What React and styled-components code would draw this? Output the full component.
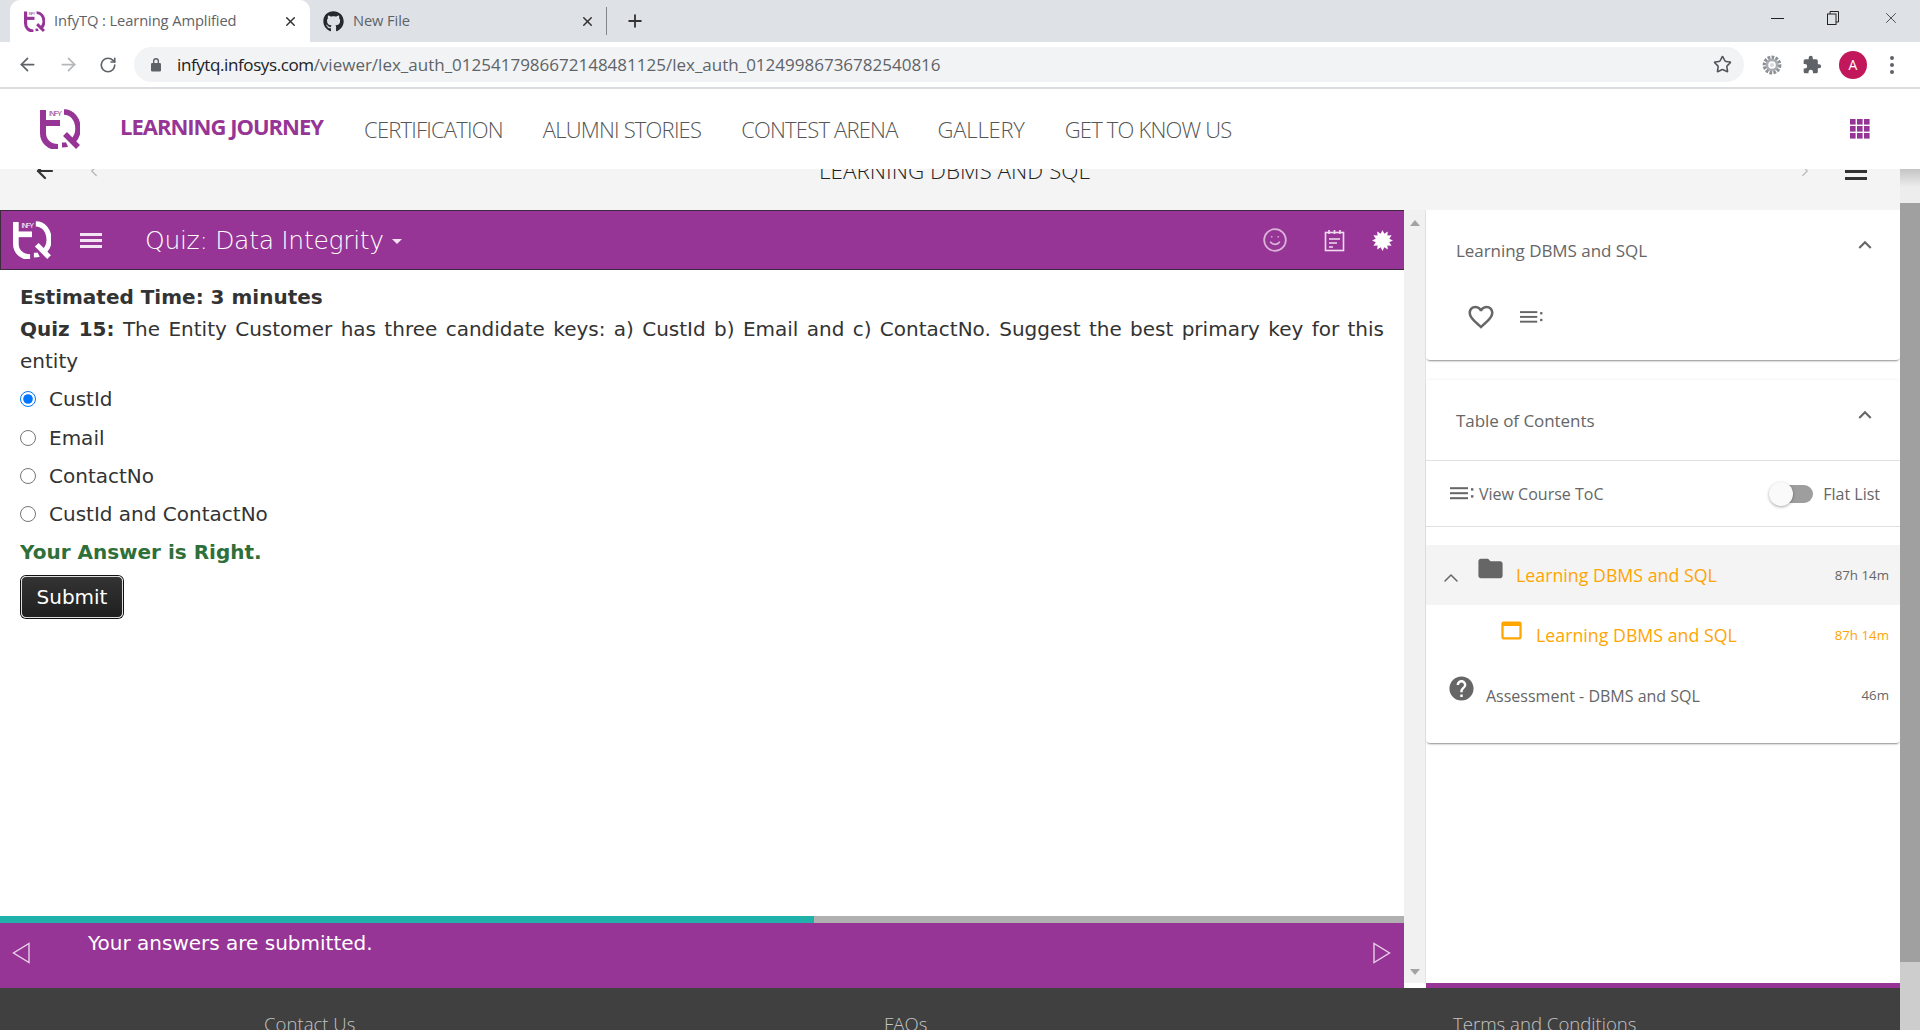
import React from 'react'
import styled, { createGlobalStyle } from 'styled-components'
import { FaGithub } from 'react-icons/fa'
import { MdFolder, MdHelp, MdFavoriteBorder, MdWebAsset, MdKeyboardArrowUp } from 'react-icons/md'
import { ArrowLeft, ArrowRight, RotateCw, Star, X, Plus, ChevronLeft, ChevronRight, ChevronUp, Smile } from 'lucide-react'

const PURPLE = '#963596'

const GlobalStyle = createGlobalStyle`
    html, body {
        margin: 0;
        padding: 0;
        height: 100%;
        overflow: hidden;
        background: #fff;
    }
    * {
        box-sizing: border-box;
    }
`

const Logo = ({ color, size }) => (
    <svg width={size} height={size} viewBox="0 0 40 40" fill="none" stroke={color}>
        <path d="M3 1 V24 C3 32 9 38 18 38" strokeWidth="6" />
        <path d="M3 14 H20" strokeWidth="6" />
        <path d="M24 3 C32 3 38 10 38 20 C38 26 36 29 33 32" strokeWidth="5.5" />
        <path d="M22 36 C24 36 26 36 27 35.5" strokeWidth="5" />
        <path d="M25 25 L38 38" strokeWidth="5.5" />
        <text x="9" y="7" fontSize="7" fill={color} stroke="none" fontFamily="Liberation Sans, sans-serif" textLength="13">INFY</text>
    </svg>
)

const ListIcon = ({ size, color }) => (
    <svg width={size} height={size * 0.6} viewBox="0 0 24 14" fill={color}>
        <rect x="0" y="1" width="18" height="2" />
        <rect x="0" y="6" width="18" height="2" />
        <rect x="0" y="11" width="18" height="2" />
        <rect x="21" y="2" width="2.4" height="2.4" />
        <rect x="21" y="9" width="2.4" height="2.4" />
    </svg>
)

const Burst = () => {
    // twelve pointed badge
    const points = []
    for (let i = 0; i < 24; i++) {
        const r = i % 2 ? 7 : 10.5
        const a = (i * Math.PI) / 12
        points.push(`${10.5 + r * Math.sin(a)},${10.5 - r * Math.cos(a)}`)
    }
    return (
        <svg width="21" height="21" viewBox="0 0 21 21">
            <polygon points={points.join(' ')} fill="#fff" />
        </svg>
    )
}

const NotesIcon = () => (
    <svg width="21" height="23" viewBox="0 0 21 23" fill="none" stroke="#f0dcf0" strokeWidth="1.6">
        <rect x="1.5" y="3.5" width="18" height="18" />
        <path d="M5 1 V5 M10.5 1 V5 M16 1 V5" />
        <path d="M5 10 H16 M5 14 H13 M5 18 H9" />
    </svg>
)

const AppsIcon = () => (
    <svg width="20" height="20" viewBox="0 0 20 20" fill={PURPLE}>
        {[0, 7, 14].map(y => [0, 7, 14].map(x => <rect key={`${x}-${y}`} x={x} y={y} width="5.6" height="5.6" />))}
    </svg>
)

const PuzzleIcon = () => (
    <svg width="20" height="20" viewBox="0 0 24 24" fill="#5f6368">
        <path d="M20.5 11H19V7a2 2 0 0 0-2-2h-4V3.5a2.5 2.5 0 0 0-5 0V5H4a2 2 0 0 0-2 2v3.8h1.5a2.7 2.7 0 0 1 0 5.4H2V20a2 2 0 0 0 2 2h3.8v-1.5a2.7 2.7 0 0 1 5.4 0V22H17a2 2 0 0 0 2-2v-4h1.5a2.5 2.5 0 0 0 0-5z" />
    </svg>
)

const GearIcon = () => (
    <svg width="20" height="20" viewBox="0 0 20 20">
        <circle cx="10" cy="10" r="7.4" fill="none" stroke="#8d9196" strokeWidth="4" strokeDasharray="2.6 1.2" />
        <circle cx="10" cy="10" r="5" fill="none" stroke="#a9adb1" strokeWidth="2.4" />
        <circle cx="10" cy="10" r="2" fill="#d6d8da" />
    </svg>
)

const LockIcon = () => (
    <svg width="12" height="15" viewBox="0 0 12 15" fill="#5f6368">
        <path d="M3 6V4a3 3 0 0 1 6 0v2h-1.4V4a1.6 1.6 0 0 0-3.2 0v2z" />
        <rect x="1" y="6" width="10" height="8.4" rx="1.2" />
    </svg>
)

const RestoreIcon = () => (
    <svg width="12" height="14" viewBox="0 0 12 14" fill="none" stroke="#222" strokeWidth="1">
        <rect x="0.5" y="3" width="8.5" height="10.5" />
        <path d="M3 3V0.5H11.5V11H9" />
    </svg>
)

const tocRows = [
    { id: 1, title: 'Learning DBMS and SQL', time: '87h 14m', kind: 'folder' },
    { id: 2, title: 'Learning DBMS and SQL', time: '87h 14m', kind: 'resource' },
    { id: 3, title: 'Assessment - DBMS and SQL', time: '46m', kind: 'quiz' },
]

const options = ['CustId', 'Email', 'ContactNo', 'CustId and ContactNo']

const navItems = ['CERTIFICATION', 'ALUMNI STORIES', 'CONTEST ARENA', 'GALLERY', 'GET TO KNOW US']

const App = () => {
    return (
        <Page>
            <GlobalStyle />
            <TabStrip>
                <ActiveTab>
                    <Logo color={PURPLE} size={21} />
                    <TabTitle>InfyTQ : Learning Amplified</TabTitle>
                    <X size={15} strokeWidth={2.4} color="#333" />
                </ActiveTab>
                <Tab>
                    <FaGithub size={21} color="#24292e" />
                    <TabTitle>New File</TabTitle>
                    <X size={15} strokeWidth={2.4} color="#333" />
                </Tab>
                <TabDivider />
                <Plus size={20} strokeWidth={2.2} color="#333" />
                <WindowControls>
                    <MinimizeBar />
                    <RestoreIcon />
                    <X size={18} strokeWidth={1} color="#222" />
                </WindowControls>
            </TabStrip>

            <Toolbar>
                <ArrowLeft size={21} color="#5f6368" strokeWidth={2} />
                <ArrowRight size={21} color="#b4b7ba" strokeWidth={2} />
                <RotateCw size={18} color="#5f6368" strokeWidth={2.2} />
                <Omnibox>
                    <LockIcon />
                    <Url><b>infytq.infosys.com</b>/viewer/lex_auth_0125417986672148481125/lex_auth_01249986736782540816</Url>
                    <Star size={19} color="#50555a" strokeWidth={2} />
                </Omnibox>
                <Extensions>
                    <GearIcon />
                    <PuzzleIcon />
                    <Avatar>A</Avatar>
                    <Dots><i /><i /><i /></Dots>
                </Extensions>
            </Toolbar>

            <SiteNav>
                <NavLogo><Logo color={PURPLE} size={40} /></NavLogo>
                <NavActive>LEARNING JOURNEY</NavActive>
                <NavLinks>
                    {navItems.map(item => <NavLink key={item}>{item}</NavLink>)}
                </NavLinks>
                <AppsIcon />
            </SiteNav>

            <Body>
                <Column>
                    <SubHeader>
                        <SubHeaderRow>
                            <ArrowLeft size={24} color="#333" strokeWidth={2.2} />
                            <PrevChevron><ChevronLeft size={18} color="#bbb" strokeWidth={2} /></PrevChevron>
                            <CourseTitle>LEARNING DBMS AND SQL</CourseTitle>
                            <ChevronRight size={18} color="#bbb" strokeWidth={1.6} />
                            <TwoBars />
                        </SubHeaderRow>
                    </SubHeader>

                    <Workspace>
                        <QuizPane>
                            <QuizHeader>
                                <Logo color="#fff" size={38} />
                                <HeaderMenu><i /><i /><i /></HeaderMenu>
                                <QuizTitle>Quiz: Data Integrity</QuizTitle>
                                <Caret />
                                <HeaderIcons>
                                    <SmileWrap><Smile size={26} color="#d9b3d9" strokeWidth={1.6} /></SmileWrap>
                                    <NotesIcon />
                                    <Burst />
                                </HeaderIcons>
                            </QuizHeader>

                            <QuizContent>
                                <TextLine><strong>Estimated Time: 3 minutes</strong></TextLine>
                                <Question><strong>Quiz 15:</strong> The Entity Customer has three candidate keys: a) CustId b) Email and c) ContactNo. Suggest the best primary key for this entity</Question>
                                {options.map((option, i) => (
                                    <Option key={option}>
                                        <Radio type="radio" name="quiz" defaultChecked={i === 0} />
                                        <span>{option}</span>
                                    </Option>
                                ))}
                                <Result>Your Answer is Right.</Result>
                                <SubmitButton>Submit</SubmitButton>
                            </QuizContent>

                            <Progress><ProgressFill style={{ width: `${(814 / 1404) * 100}%` }} /></Progress>
                            <BottomBar>
                                <BarArrow width="18" height="22" viewBox="0 0 18 22" fill="none" stroke="#e8cfe8" strokeWidth="1.4"><path d="M17 1.5 V20.5 L1.5 11 Z" /></BarArrow>
                                <BottomText>Your answers are submitted.</BottomText>
                                <BarArrow width="18" height="22" viewBox="0 0 18 22" fill="none" stroke="#e8cfe8" strokeWidth="1.4"><path d="M1 1.5 V20.5 L16.5 11 Z" /></BarArrow>
                            </BottomBar>
                        </QuizPane>

                        <PaneScroll>
                            <ArrowUp />
                            <ArrowDown />
                        </PaneScroll>

                        <Sidebar>
                            <Card>
                                <CardHeader>
                                    <CardTitle>Learning DBMS and SQL</CardTitle>
                                    <MdKeyboardArrowUp size={26} color="#666" />
                                </CardHeader>
                                <CardActions>
                                    <MdFavoriteBorder size={30} color="#666" />
                                    <ListIcon size={23} color="#666" />
                                </CardActions>
                            </Card>

                            <TocCard>
                                <CardHeader>
                                    <CardTitle>Table of Contents</CardTitle>
                                    <MdKeyboardArrowUp size={26} color="#666" />
                                </CardHeader>
                                <TocToolbar>
                                    <ListIcon size={24} color="#666" />
                                    <ToolbarLabel>View Course ToC</ToolbarLabel>
                                    <Toggle><ToggleThumb /></Toggle>
                                    <FlatLabel>Flat List</FlatLabel>
                                </TocToolbar>
                                <TocList>
                                    {tocRows.map(row => (
                                        <TocRow key={row.id} $kind={row.kind}>
                                            {row.kind === 'folder' && <ChevronUp size={24} color="#666" strokeWidth={1.5} />}
                                            {row.kind === 'folder' && <RowIcon $kind={row.kind}><MdFolder size={29} color="#666" /></RowIcon>}
                                            {row.kind === 'resource' && <RowIcon $kind={row.kind}><MdWebAsset size={27} color="#ffa500" /></RowIcon>}
                                            {row.kind === 'quiz' && <RowIcon $kind={row.kind}><MdHelp size={29} color="#666" /></RowIcon>}
                                            <RowTitle $kind={row.kind}>{row.title}</RowTitle>
                                            <RowTime $kind={row.kind}>{row.time}</RowTime>
                                        </TocRow>
                                    ))}
                                </TocList>
                            </TocCard>
                        </Sidebar>
                    </Workspace>

                    <Footer>
                        <FooterLink>Contact Us</FooterLink>
                        <FooterLink>FAQs</FooterLink>
                        <FooterLink>Terms and Conditions</FooterLink>
                    </Footer>
                </Column>
                <PageScroll>
                    <ScrollThumb />
                </PageScroll>
            </Body>
        </Page>
    )
}

const Page = styled.div`
    width: 1920px;
    height: 1030px;
    display: flex;
    flex-direction: column;
    overflow: hidden;
    font-family: "Open Sans", sans-serif;
`

const TabStrip = styled.div`
    height: 42px;
    flex: none;
    display: flex;
    align-items: center;
    background: #dee1e6;
    padding-left: 10px;
`

const ActiveTab = styled.div`
    width: 300px;
    height: 42px;
    display: flex;
    align-items: center;
    background: #fff;
    border-radius: 10px 10px 0 0;
    padding: 0 12px 0 14px;
    margin-right: 13px;
`

const Tab = styled.div`
    width: 272px;
    height: 42px;
    display: flex;
    align-items: center;
`

const TabTitle = styled.span`
    flex: 1;
    margin: 0 0 2px 9px;
    font-size: 14.7px;
    letter-spacing: -0.1px;
    color: #5f6368;
    white-space: nowrap;
`

const TabDivider = styled.div`
    width: 1px;
    height: 28px;
    background: #80868b;
    margin: 0 18px 0 11px;
`

const WindowControls = styled.div`
    margin-left: auto;
    display: flex;
    align-items: center;
    gap: 43px;
    padding: 0 20px 6px 0;
`

const MinimizeBar = styled.div`
    width: 13px;
    height: 1px;
    background: #222;
`

const Toolbar = styled.div`
    height: 45px;
    flex: none;
    display: flex;
    align-items: center;
    gap: 20px;
    padding-left: 17px;
    background: #fff;
`

const Omnibox = styled.div`
    width: 1610px;
    height: 35px;
    margin-left: -3px;
    display: flex;
    align-items: center;
    border-radius: 18px;
    background: #f1f3f4;
    padding: 0 12px 0 16px;
`

const Url = styled.div`
    flex: 1;
    margin-left: 15px;
    font-size: 17px;
    color: #5f6368;
    white-space: nowrap;

    & b {
        font-weight: 400;
        color: #202124;
        letter-spacing: -0.4px;
    }
`

const Extensions = styled.div`
    display: flex;
    align-items: center;
    gap: 20px;
    margin-left: -2px;
`

const Avatar = styled.div`
    width: 28px;
    height: 28px;
    margin: 0 3px 0 -3px;
    border-radius: 50%;
    background: #c2185b;
    color: #fff;
    font-size: 14px;
    display: flex;
    align-items: center;
    justify-content: center;
`

const Dots = styled.div`
    display: flex;
    flex-direction: column;
    gap: 3px;

    & i {
        display: block;
        width: 4px;
        height: 4px;
        border-radius: 50%;
        background: #5f6368;
    }
`

const SiteNav = styled.div`
    height: 82px;
    flex: none;
    display: flex;
    align-items: center;
    background: #fff;
    border-top: 2px solid #dadce0;
    padding-right: 50px;
`

const NavLogo = styled.div`
    display: flex;
    margin: 0 40px 0 40px;
`

const NavActive = styled.div`
    font-size: 22px;
    font-weight: 700;
    letter-spacing: -1px;
    color: ${PURPLE};
    white-space: nowrap;
    margin-top: -6px;
`

const NavLinks = styled.div`
    flex: 1;
    display: flex;
    gap: 40px;
    margin-left: 41px;
`

const NavLink = styled.div`
    font-size: 22px;
    font-weight: 300;
    letter-spacing: -0.8px;
    color: #555;
    white-space: nowrap;

    &:nth-child(4) {
        letter-spacing: -0.2px;
    }
`

const Body = styled.div`
    flex: 1;
    display: flex;
    min-height: 0;
`

const Column = styled.div`
    width: 1900px;
    display: flex;
    flex-direction: column;
`

const SubHeader = styled.div`
    height: 41px;
    flex: none;
    overflow: hidden;
    background: #f4f4f4;
`

const SubHeaderRow = styled.div`
    height: 42px;
    margin-top: -19px;
    display: flex;
    align-items: center;
    padding: 0 33px;
`

const PrevChevron = styled.div`
    display: flex;
    margin-left: 28px;
`

const CourseTitle = styled.div`
    flex: 1;
    margin: -2px 0 0 10px;
    text-align: center;
    font-size: 22.5px;
    font-weight: 300;
    color: #222;
`

const TwoBars = styled.div`
    width: 22px;
    height: 10px;
    margin-left: 31px;
    margin-top: 8px;
    border-top: 3px solid #333;
    border-bottom: 3px solid #333;
`

const Workspace = styled.div`
    height: 778px;
    flex: none;
    display: flex;
`

const QuizPane = styled.div`
    width: 1404px;
    flex: none;
    display: flex;
    flex-direction: column;
    font-family: "DejaVu Sans", Verdana, sans-serif;
`

const QuizHeader = styled.div`
    height: 60px;
    flex: none;
    display: flex;
    align-items: center;
    background: ${PURPLE};
    border: 1px solid #3d2b3d;
    border-width: 1px 0 1px 1px;
    padding-left: 12px;
`

const HeaderMenu = styled.div`
    display: flex;
    flex-direction: column;
    gap: 3px;
    margin: 0 43px 0 29px;

    & i {
        display: block;
        width: 22px;
        height: 3px;
        background: #f3e3f3;
    }
`

const QuizTitle = styled.div`
    font-size: 25px;
    font-weight: 200;
    letter-spacing: -0.3px;
    color: #fff;
`

const Caret = styled.div`
    width: 0;
    height: 0;
    margin: 3px 0 0 8px;
    border-left: 5px solid transparent;
    border-right: 5px solid transparent;
    border-top: 5px solid #f3e3f3;
`

const HeaderIcons = styled.div`
    margin-left: auto;
    display: flex;
    align-items: center;
    gap: 27px;
    padding-right: 11px;
`

const SmileWrap = styled.div`
    display: flex;
    margin-right: 9px;
`

const QuizContent = styled.div`
    flex: 1;
    background: #fff;
    padding: 11px 20px 0 20px;
    font-size: 20px;
    line-height: 32px;
    color: #333;
`

const TextLine = styled.div``

const Question = styled.div`
    margin-bottom: 3px;
    text-align: justify;
`

const Option = styled.label`
    height: 38.4px;
    display: flex;
    align-items: center;
    gap: 13px;
`

const Radio = styled.input`
    width: 16px;
    height: 16px;
    margin: 0;
    accent-color: #0075ff;
`

const Result = styled.div`
    font-weight: 700;
    color: #2e6f3a;
    line-height: 36px;
`

const SubmitButton = styled.button`
    display: block;
    width: 102px;
    height: 42px;
    margin: 6px 0 0 1px;
    padding: 0;
    font-family: inherit;
    font-size: 20px;
    color: #fff;
    border-radius: 5px;
    border: 1px solid #ddd;
    box-shadow: 0 0 0 1px #111;
    background: linear-gradient(#333, #1f1f1f);
`

const Progress = styled.div`
    height: 7px;
    flex: none;
    background: #b0b0b0;
`

const ProgressFill = styled.div`
    height: 100%;
    background: #20b2aa;
`

const BottomBar = styled.div`
    height: 65px;
    flex: none;
    display: flex;
    align-items: center;
    background: ${PURPLE};
    padding: 0 13px 0 12px;
`

const BarArrow = styled.svg`
    margin-bottom: 6px;
`

const BottomText = styled.div`
    flex: 1;
    align-self: flex-start;
    margin: 8px 0 0 58px;
    font-size: 20px;
    color: #fff;
`

const PaneScroll = styled.div`
    width: 22px;
    flex: none;
    display: flex;
    flex-direction: column;
    justify-content: space-between;
    align-items: center;
    padding: 10px 0 8px;
    margin-bottom: 5px;
    background: #f1f1f1;
    border-right: 1px solid #e4e4e4;
`

const ArrowUp = styled.div`
    width: 0;
    height: 0;
    border-left: 5px solid transparent;
    border-right: 5px solid transparent;
    border-bottom: 6px solid #a3a3a3;
`

const ArrowDown = styled.div`
    width: 0;
    height: 0;
    border-left: 5px solid transparent;
    border-right: 5px solid transparent;
    border-top: 6px solid #a3a3a3;
`

const Sidebar = styled.div`
    flex: 1;
    display: flex;
    flex-direction: column;
    gap: 20px;
    background: #fff;
    border-bottom: 5px solid ${PURPLE};
`

const Card = styled.div`
    height: 150px;
    flex: none;
    background: #fff;
    border-radius: 4px;
    box-shadow: 0 2px 2px -1px rgba(0, 0, 0, 0.45);
`

const TocCard = styled(Card)`
    height: 363px;
    box-shadow: 0 2px 2px -1px rgba(0, 0, 0, 0.45), 0 -1px 2px rgba(0, 0, 0, 0.04);
`

const CardHeader = styled.div`
    height: 80px;
    display: flex;
    align-items: center;
    justify-content: space-between;
    padding: 0 22px 0 30px;

    & svg {
        margin-bottom: 10px;
    }
`

const CardTitle = styled.div`
    font-size: 17px;
    letter-spacing: -0.05px;
    color: #666;
`

const CardActions = styled.div`
    display: flex;
    align-items: center;
    gap: 24px;
    padding: 12px 0 0 40px;
`

const TocToolbar = styled.div`
    height: 67px;
    display: flex;
    align-items: center;
    padding: 0 20px 0 24px;
    border-top: 1px solid #e0e0e0;
    border-bottom: 1px solid #e0e0e0;
    font-size: 16px;
    color: #666;
`

const ToolbarLabel = styled.div`
    flex: 1;
    margin-left: 5px;
`

const FlatLabel = styled.div`
    margin-left: 10px;
`

const Toggle = styled.div`
    position: relative;
    width: 34px;
    height: 18px;
    margin-left: 12px;
    border-radius: 9px;
    background: #9e9e9e;
`

const ToggleThumb = styled.div`
    position: absolute;
    left: -10px;
    top: -3px;
    width: 24px;
    height: 24px;
    border-radius: 50%;
    background: #fafafa;
    box-shadow: 0 1px 3px rgba(0, 0, 0, 0.35);
`

const TocList = styled.div`
    margin-top: 18px;
`

const TocRow = styled.div`
    height: 60px;
    display: flex;
    align-items: center;
    padding: ${p => (p.$kind === 'resource' ? '0 11px 0 72px' : p.$kind === 'folder' ? '0 11px 0 13px' : '0 11px 0 21px')};
    background: ${p => (p.$kind === 'folder' ? '#f4f4f4' : '#fff')};

    & > svg {
        margin-top: 6px;
    }
`

const RowIcon = styled.div`
    display: flex;
    margin: ${p => (p.$kind === 'resource' ? '-9px' : '-14px')} 0 0 ${p => (p.$kind === 'folder' ? '13px' : '0')};
`

const RowTitle = styled.div`
    flex: 1;
    margin: ${p => (p.$kind === 'quiz' ? '2px 0 0 10px' : '0 0 0 11px')};
    font-size: ${p => (p.$kind === 'quiz' ? '16px' : '17.8px')};
    color: ${p => (p.$kind === 'quiz' ? '#666' : '#ffa500')};
`

const RowTime = styled.div`
    font-size: 13.3px;
    color: ${p => (p.$kind === 'resource' ? '#ffa500' : '#666')};
`

const Footer = styled.div`
    height: 42px;
    flex: none;
    display: grid;
    grid-template-columns: 620px 569px 1fr;
    padding: 24px 0 0 264px;
    background: #404040;
`

const FooterLink = styled.div`
    font-size: 18.6px;
    font-weight: 300;
    line-height: 24px;
    color: #c4c4c4;
`

const PageScroll = styled.div`
    width: 20px;
    flex: none;
    padding-top: 34px;
    background: linear-gradient(#c4c4c4, #ededed 18px);
`

const ScrollThumb = styled.div`
    height: 1000px;
    box-shadow: 0 759px 0 0 #a0a0a0 inset;
    background: #cdcdcd;
`

export default App
